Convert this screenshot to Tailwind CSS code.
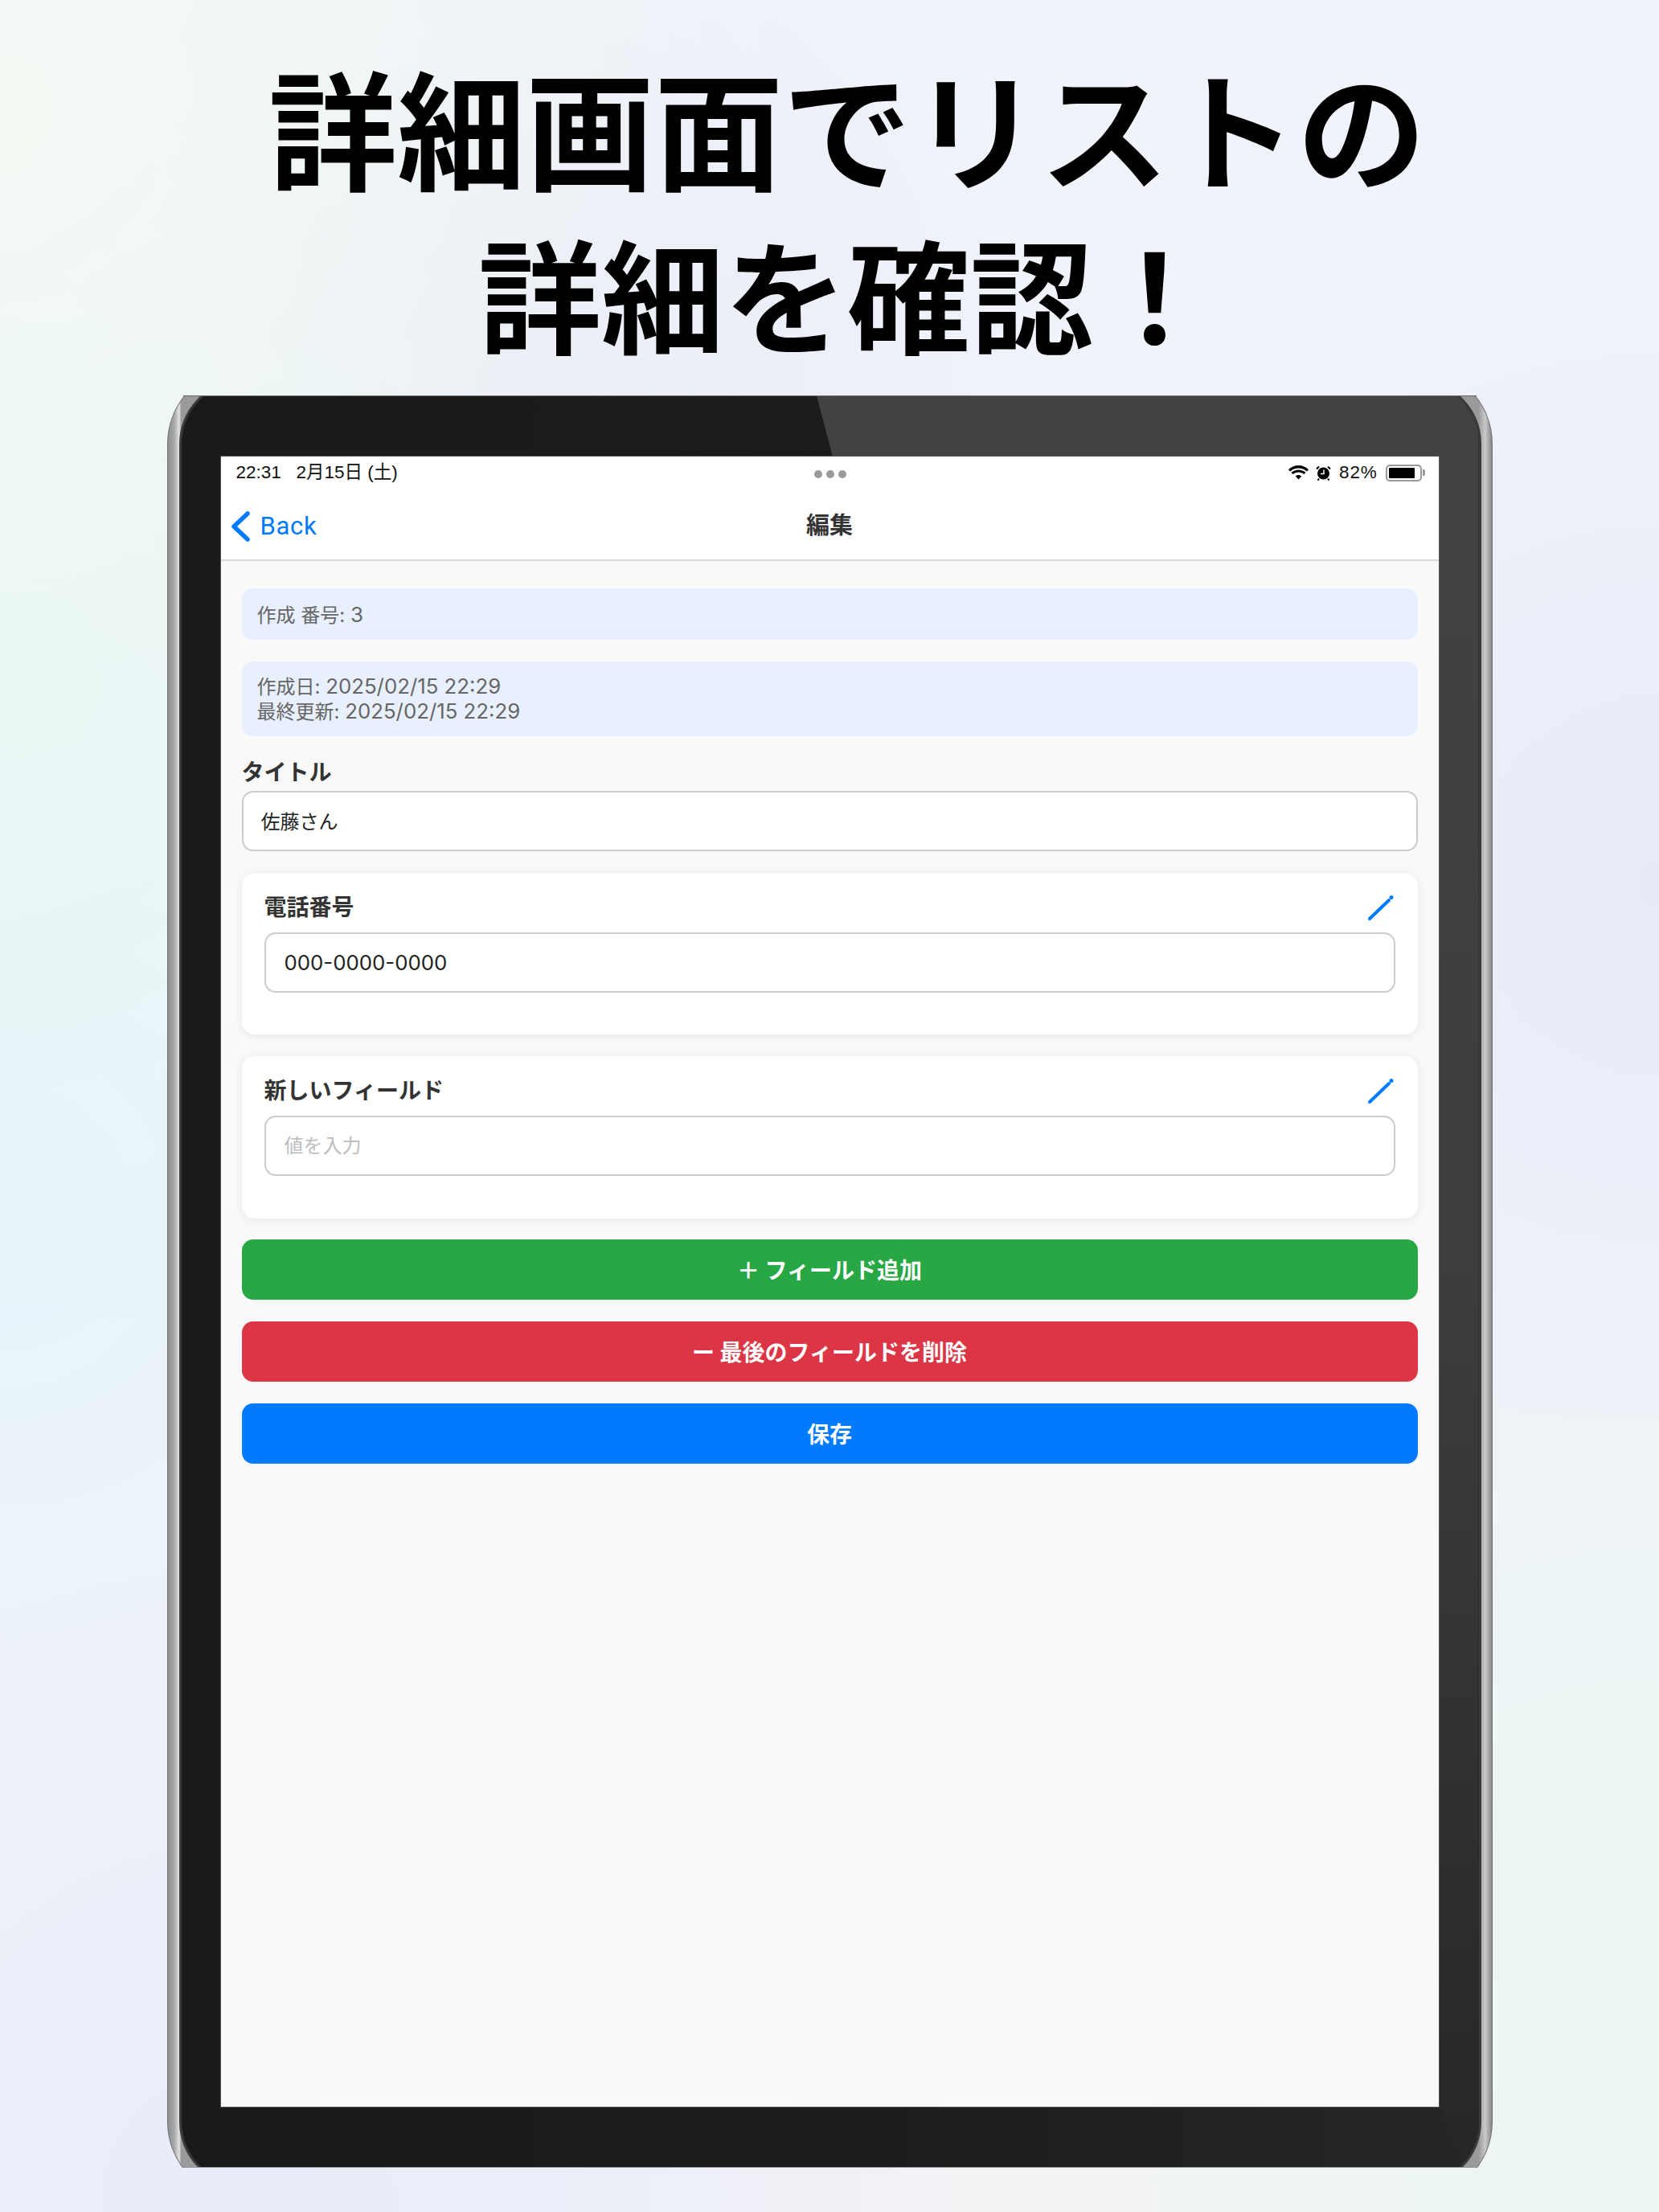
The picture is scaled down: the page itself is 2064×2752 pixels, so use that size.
<!DOCTYPE html>
<html lang="ja">
<head>
  <meta charset="UTF-8" />
  <title>詳細画面</title>
  <script src="https://cdn.jsdelivr.net/npm/@tailwindcss/browser@4"></script>
</head>
<body class="font-['Inter','Noto_Sans_CJK_JP',sans-serif]">
  <div class="w-[2064px] h-[2752px] overflow-hidden flex flex-col items-center bg-[#f0f3fa] bg-[radial-gradient(circle_at_0%_5%,#f3faf4_0,transparent_30%),radial-gradient(circle_at_0%_32%,#e6f7f5_0,transparent_28%),radial-gradient(circle_at_0%_55%,#e6f4fb_0,transparent_25%),radial-gradient(circle_at_100%_40%,#e8ebf7_0,transparent_30%),radial-gradient(circle_at_100%_92%,#ecf7f2_0,transparent_32%),radial-gradient(circle_at_15%_100%,#e7ecf8_0,transparent_28%),radial-gradient(circle_at_60%_100%,#f6f1f5_0,transparent_25%),radial-gradient(circle_at_30%_17%,#e9ebf6_0,transparent_25%)]">

    <h1 class="w-full pt-[51px] pl-[44px] h-[492px] text-center leading-[208px] font-bold text-black font-['Noto_Sans_CJK_JP',sans-serif]">
      <div class="text-[160px]">詳細画面でリストの</div>
      <div class="text-[153px]">詳細を確認！</div>
    </h1>

    <!-- tablet is cropped at top and bottom -->
    <div class="relative w-[1649px] h-[2205px] overflow-hidden">
      <div class="relative mt-[-35px] h-[2278px] rounded-[95px] p-[1px] bg-[#707072]">
        <div class="h-full rounded-[94px] pl-[14px] pr-[13px] py-[14px] bg-[linear-gradient(90deg,#8d8e90_0,#a9aaac_0.5%,#e4e4e4_0.85%,#9a9a9c_1%,#9a9a9c_99%,#c9c9cb_99.5%,#88888a_100%)]">
          <div class="relative h-full rounded-[80px] border-[3px] border-[#3a3a3a] bg-[linear-gradient(90deg,#1a1a1a_0,#1c1c1c_50%,#262626_100%)] overflow-hidden">
            <div class="absolute inset-0 bg-[linear-gradient(180deg,#434343_0,#3d3d3d_50%,#262626_100%)] [clip-path:polygon(48.7%_0,100%_0,100%_100%,96.5%_95%,56%_20%)]"></div>
          </div>
        </div>
      </div>
      <div class="absolute top-0 inset-x-[20px] h-px bg-[#666]"></div>
      <div class="absolute bottom-0 inset-x-[20px] h-px bg-[#999]"></div>

      <!-- screen -->
      <div class="absolute left-[67px] top-[76px] w-[1515px] h-[2053px] bg-[#f9f9f9] ring-1 ring-[#555] flex flex-col">
        <div class="relative h-[130px] bg-white border-b-2 border-[#d9d9d9] shrink-0">
          <div class="flex items-center justify-between h-[38px] pt-[2px] pl-[19px] pr-[17px] text-[22.500px] text-[#111]">
            <span class="font-['Liberation_Sans','Noto_Sans_CJK_JP',sans-serif]">22:31&nbsp;&nbsp; 2月15日 (土)</span>
            <div class="flex items-center gap-[8px]">
              <svg width="27" height="18" viewBox="0 0 27 18" fill="#000"><path d="M13.5 3.5c4 0 7.6 1.5 10.3 4l2.2-2.3C22.700 2 18.300 0 13.500 0S4.300 2 1 5.200l2.200 2.300c2.700-2.500 6.300-4 10.300-4z"/><path d="M13.500 8.500c2.600 0 5 1 6.800 2.600l2.200-2.300c-2.400-2.100-5.500-3.400-9-3.400s-6.600 1.300-9 3.400l2.200 2.300c1.800-1.600 4.200-2.600 6.800-2.600z"/><path d="M13.500 12c-1.500 0-2.800.6-3.800 1.500l3.800 4 3.800-4c-1-.9-2.300-1.500-3.800-1.500z"/></svg>
              <svg width="19" height="19" viewBox="0 0 19 19"><circle cx="9.500" cy="10" r="7.500" fill="#000"/><path d="M1 4.500 4 1.500M18 4.500 15 1.500M4 16.500 2.500 18.500M15 16.500 16.500 18.500" stroke="#000" stroke-width="2"/><path d="M10 5.500v5H6" stroke="#fff" stroke-width="1.500" fill="none"/></svg>
              <span class="ml-[2px] tracking-[0.8px] font-['Liberation_Sans',sans-serif]">82%</span>
              <div class="flex items-center ml-[2px]">
                <div class="w-[45px] h-[21px] rounded-[5px] border-2 border-[#999] p-[2px] bg-white"><div class="w-[32px] h-full rounded-[1px] bg-black"></div></div>
                <div class="w-[3px] h-[8px] rounded-r-[2px] bg-[#999] ml-[1px]"></div>
              </div>
            </div>
          </div>
          <div class="absolute left-[738px] top-[17px] flex gap-[5px]">
            <span class="size-[10px] rounded-full bg-[#9a9a9a]"></span>
            <span class="size-[10px] rounded-full bg-[#9a9a9a]"></span>
            <span class="size-[10px] rounded-full bg-[#9a9a9a]"></span>
          </div>
          <div class="relative flex items-center justify-center h-[92px]">
            <div class="absolute left-[12px] top-[30px] flex items-center gap-[13px] text-[#007aff]">
              <svg width="24" height="38" viewBox="0 0 24 38" fill="none"><path d="M21 3 4 19l17 16" stroke="#007aff" stroke-width="5.500" stroke-linecap="round" stroke-linejoin="round"/></svg>
              <span class="text-[31px] leading-[38px] font-['Roboto',sans-serif] tracking-[0.7px]">Back</span>
            </div>
            <span class="pt-[3px] text-[29px] font-bold text-[#333]">編集</span>
          </div>
        </div>

        <div class="flex flex-col px-[26px] pt-[34px] text-[#333]">
          <div class="h-[64px] flex items-center px-[19px] rounded-[14px] bg-[#e8f0fe] text-[24px] text-[#666]"><div>作成 番号: <span class="text-[26px]">3</span></div></div>
          <div class="mt-[27px] h-[93px] flex flex-col justify-center px-[19px] rounded-[14px] bg-[#e8f0fe] text-[24px] leading-[30px] text-[#666]">
            <div>作成日: <span class="text-[25.800px]">2025/02/15 22:29</span></div>
            <div>最終更新: <span class="text-[25.800px]">2025/02/15 22:29</span></div>
          </div>
          <label class="mt-[23px] h-[44px] mb-[1px] flex items-center text-[28px] font-bold">タイトル</label>
          <input value="佐藤さん" class="h-[75px] px-[22px] pb-[2px] rounded-[14px] border-2 border-[#ccc] bg-white text-[24px] text-[#222]">

          <div class="mt-[27px] h-[201px] px-[28px] rounded-[16px] bg-white shadow-[0_2px_12px_rgba(0,0,0,0.08)]">
            <div class="flex items-center justify-between h-[74px] pt-[12px] pr-[2px]">
              <span class="text-[28px] font-bold">電話番号</span>
              <svg width="32" height="32" viewBox="0 0 32 32" fill="none"><path d="M2 30 26 7" stroke="#007aff" stroke-width="4" stroke-linecap="round"/><circle cx="29" cy="3.500" r="2.500" fill="#007aff"/></svg>
            </div>
            <input value="000-0000-0000" class="w-full h-[75px] px-[23px] rounded-[14px] border-2 border-[#ccc] bg-white text-[25.800px] text-[#222]">
          </div>

          <div class="mt-[27px] h-[202px] px-[28px] rounded-[16px] bg-white shadow-[0_2px_12px_rgba(0,0,0,0.08)]">
            <div class="flex items-center justify-between h-[74px] pt-[12px] pr-[2px]">
              <span class="text-[28px] font-bold">新しいフィールド</span>
              <svg width="32" height="32" viewBox="0 0 32 32" fill="none"><path d="M2 30 26 7" stroke="#007aff" stroke-width="4" stroke-linecap="round"/><circle cx="29" cy="3.500" r="2.500" fill="#007aff"/></svg>
            </div>
            <input placeholder="値を入力" class="w-full h-[75px] px-[23px] rounded-[14px] border-2 border-[#ccc] bg-white text-[24px] text-[#222] placeholder:text-[#bdbdbd]">
          </div>

          <button class="mt-[26px] h-[75px] pt-[2px] rounded-[14px] bg-[#28a745] text-white text-[28px] font-bold">＋ フィールド追加</button>
          <button class="mt-[27px] h-[75px] pt-[2px] rounded-[14px] bg-[#dc3545] text-white text-[28px] font-bold">ー 最後のフィールドを削除</button>
          <button class="mt-[27px] h-[75px] pt-[2px] rounded-[14px] bg-[#007bff] text-white text-[28px] font-bold">保存</button>
        </div>
      </div>
    </div>
  </div>
</body>
</html>
